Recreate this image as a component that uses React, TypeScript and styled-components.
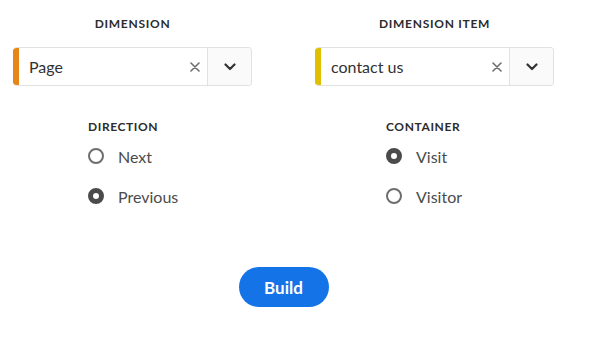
import styled, { createGlobalStyle } from "styled-components";

const GlobalStyle = createGlobalStyle`
  html, body {
    margin: 0;
    padding: 0;
    background: #ffffff;
  }
  body {
    font-family: Lato, "Noto Sans", sans-serif;
    color: #2c2c2c;
  }
`;

type Option = { label: string; checked: boolean };

export default function App() {
  return (
    <>
      <GlobalStyle />
      <Page>
        <Columns>
          <Column>
            <FieldLabel>Dimension</FieldLabel>
            <ComboBox accent="#e68619" value="Page" />
          </Column>
          <Column>
            <FieldLabel>Dimension item</FieldLabel>
            <ComboBox accent="#dfbf00" value="contact us" />
          </Column>
          <RadioGroup
            indent={75}
            title="Direction"
            options={[
              { label: "Next", checked: false },
              { label: "Previous", checked: true },
            ]}
          />
          <RadioGroup
            indent={71}
            title="Container"
            options={[
              { label: "Visit", checked: true },
              { label: "Visitor", checked: false },
            ]}
          />
        </Columns>
        <Footer>
          <BuildButton>Build</BuildButton>
        </Footer>
      </Page>
    </>
  );
}

function ComboBox({ accent, value }: { accent: string; value: string }) {
  return (
    <Combo>
      <Accent $color={accent} />
      <ComboText>{value}</ComboText>
      <ClearButton aria-label="clear">
        <svg width="10" height="10" viewBox="0 0 10 10">
          <path d="M1 1 L9 9 M9 1 L1 9" stroke="#6e6e6e" strokeWidth="1.6" strokeLinecap="round" />
        </svg>
      </ClearButton>
      <ChevronButton aria-label="open">
        <svg width="12" height="8" viewBox="0 0 12 8">
          <path d="M1.5 1.5 L6 6 L10.5 1.5" fill="none" stroke="#323232" strokeWidth="2.2" strokeLinecap="round" strokeLinejoin="round" />
        </svg>
      </ChevronButton>
    </Combo>
  );
}

function RadioGroup({ title, options, indent }: { title: string; options: Option[]; indent: number }) {
  return (
    <Group $indent={indent}>
      <GroupLabel>{title}</GroupLabel>
      {options.map((o) => (
        <RadioRow key={o.label}>
          <RadioCircle $checked={o.checked} />
          <RadioText>{o.label}</RadioText>
        </RadioRow>
      ))}
    </Group>
  );
}

const Page = styled.div`
  width: 541px;
  padding: 15px 0 0 13px;
  display: flex;
  flex-direction: column;
`;

const Columns = styled.div`
  display: grid;
  grid-template-columns: 239px 239px;
  column-gap: 63px;
  row-gap: 32px;
`;

const Column = styled.div`
  display: flex;
  flex-direction: column;
  align-items: center;
  gap: 14px;
`;

const FieldLabel = styled.div`
  font-size: 12px;
  font-weight: 700;
  letter-spacing: 0.06em;
  text-transform: uppercase;
  line-height: 18px;
  color: #2c2c2c;
`;

const Combo = styled.div`
  width: 239px;
  height: 39px;
  box-sizing: border-box;
  display: flex;
  align-items: stretch;
  border: 1px solid #e1e1e1;
  border-left: none;
  border-radius: 4px;
  background: #ffffff;
  overflow: hidden;
`;

const Accent = styled.div<{ $color: string }>`
  width: 6px;
  flex-shrink: 0;
  background: ${(p) => p.$color};
`;

const ComboText = styled.div`
  flex: 1;
  display: flex;
  align-items: center;
  padding-left: 10px;
  font-size: 16px;
  color: #323232;
`;

const ClearButton = styled.div`
  width: 24px;
  display: flex;
  align-items: center;
  justify-content: center;
`;

const ChevronButton = styled.div`
  width: 43px;
  display: flex;
  align-items: center;
  justify-content: center;
  border-left: 1px solid #e1e1e1;
  background: #fafafa;
`;

const Group = styled.div<{ $indent: number }>`
  display: flex;
  flex-direction: column;
  padding-left: ${(p) => p.$indent}px;
`;

const GroupLabel = styled.div`
  font-size: 12px;
  font-weight: 700;
  letter-spacing: 0.05em;
  text-transform: uppercase;
  line-height: 18px;
  color: #2c2c2c;
`;

const RadioRow = styled.div`
  display: flex;
  align-items: center;
  gap: 14px;
  height: 40px;
`;

const RadioCircle = styled.span<{ $checked: boolean }>`
  width: 16px;
  height: 16px;
  box-sizing: border-box;
  border-radius: 50%;
  background: #ffffff;
  border: ${(p) => (p.$checked ? "5px solid #4b4b4b" : "2px solid #6e6e6e")};
`;

const RadioText = styled.span`
  font-size: 16px;
  color: #4b4b4b;
`;

const Footer = styled.div`
  display: flex;
  justify-content: center;
  margin-top: 51px;
`;

const BuildButton = styled.button`
  width: 90px;
  height: 40px;
  border: none;
  border-radius: 20px;
  background: #1473e6;
  color: #ffffff;
  font-family: inherit;
  font-size: 17px;
  font-weight: 700;
  cursor: pointer;
`;
